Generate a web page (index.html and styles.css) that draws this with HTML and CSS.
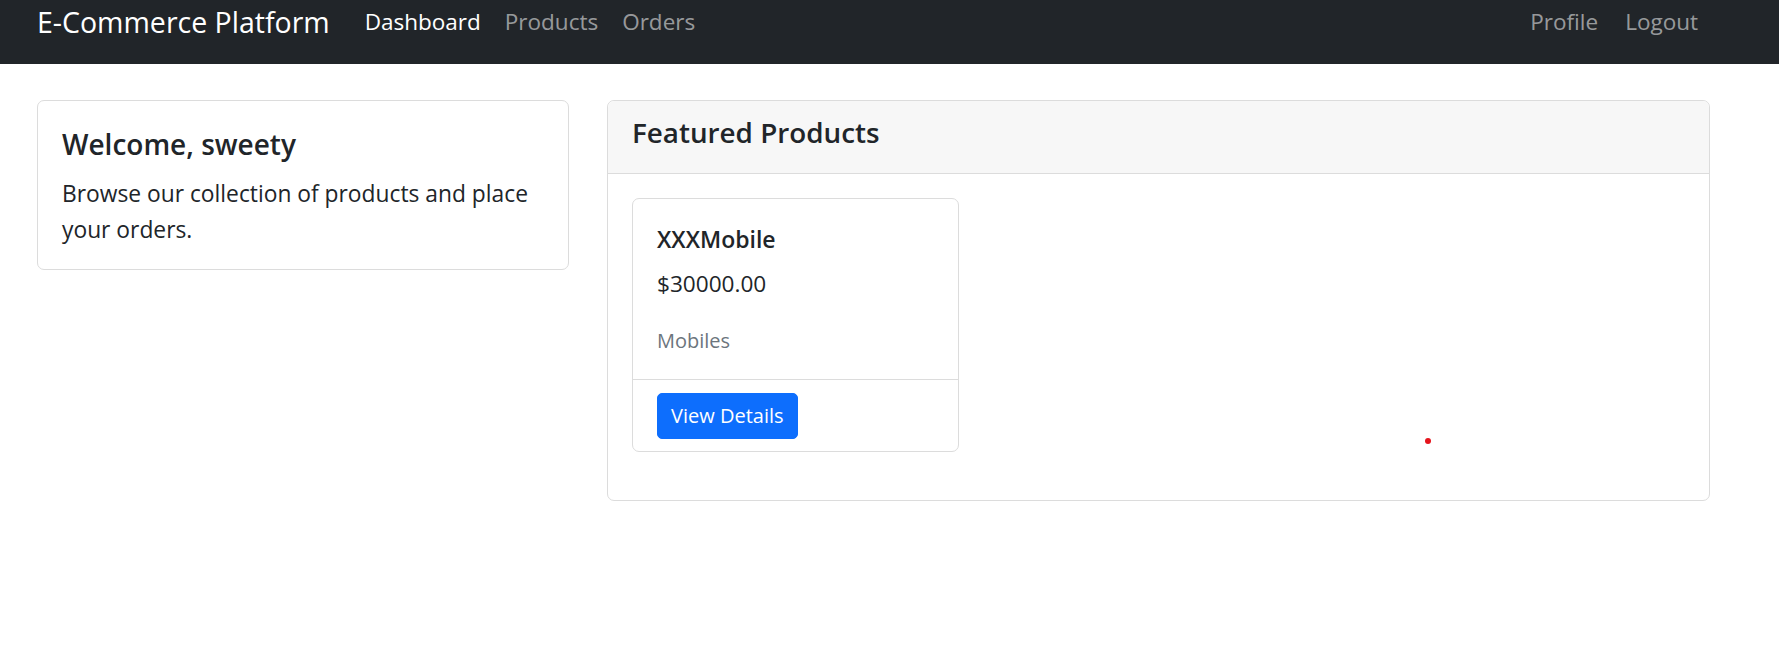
FILE: index.html
```html
<!DOCTYPE html>
<html lang="en">
<head>
<meta charset="utf-8">
<title>E-Commerce Platform</title>
<link rel="stylesheet" href="styles.css">
</head>
<body>
<nav class="navbar">
  <a class="brand" href="#">E-Commerce Platform</a>
  <ul class="nav-links">
    <li><a class="nav-link active" href="#">Dashboard</a></li>
    <li><a class="nav-link" href="#">Products</a></li>
    <li><a class="nav-link" href="#">Orders</a></li>
  </ul>
  <ul class="nav-links nav-right">
    <li><a class="nav-link" href="#">Profile</a></li>
    <li><a class="nav-link" href="#">Logout</a></li>
  </ul>
</nav>
<main class="main">
  <section class="card welcome">
    <div class="welcome-body">
      <h5 class="card-title">Welcome, sweety</h5>
      <p class="welcome-text">Browse our collection of products and place your orders.</p>
    </div>
  </section>
  <section class="card featured">
    <div class="card-header">
      <h4 class="header-title">Featured Products</h4>
    </div>
    <div class="featured-body">
      <div class="product-grid">
        <div class="card product">
          <div class="product-body">
            <h5 class="product-title">XXXMobile</h5>
            <p class="price">$30000.00</p>
            <p class="category">Mobiles</p>
          </div>
          <div class="product-footer">
            <a class="btn-primary" href="#">View Details</a>
          </div>
        </div>
      </div>
    </div>
  </section>
</main>
<span class="cursor-dot"></span>
</body>
</html>
```
FILE: styles.css
```css
* { box-sizing: border-box; }
html, body { margin: 0; padding: 0; }
body {
  font-family: "Open Sans", "Noto Sans", "Liberation Sans", sans-serif;
  color: #212529;
  background: #fff;
  position: relative;
  min-height: 661px;
}
a { text-decoration: none; }

.navbar {
  display: flex;
  align-items: flex-start;
  height: 64px;
  background: #212529;
  padding: 0 81px 0 37px;
}
.brand {
  color: #fff;
  font-size: 28.5px;
  line-height: 44px;
  white-space: nowrap;
}
.nav-links {
  list-style: none;
  display: flex;
  gap: 24px;
  margin: 0 0 0 35px;
  padding: 0;
}
.nav-right { margin-left: auto; gap: 27px; }
.nav-link {
  color: rgba(255, 255, 255, 0.55);
  font-size: 22.5px;
  line-height: 44px;
  display: block;
}
.nav-link.active { color: #fff; }

.main {
  display: grid;
  grid-template-columns: 532px 1103px;
  gap: 38px;
  align-items: start;
  padding: 36px 69px 0 37px;
}
.card {
  border: 1px solid #dcdcdc;
  border-radius: 7px;
  background: #fff;
}
.welcome-body { padding: 26px 24px 21px; }
.card-title {
  margin: 0 0 15px;
  font-size: 28px;
  font-weight: 600;
  line-height: 34px;
}
.welcome-text {
  margin: 0;
  font-size: 22.8px;
  line-height: 36px;
}

.card-header {
  background: #f7f7f7;
  border-bottom: 1px solid #dcdcdc;
  border-radius: 7px 7px 0 0;
  padding: 14px 24px 24px;
}
.header-title {
  margin: 0;
  font-size: 27.8px;
  font-weight: 600;
  line-height: 34px;
}
.featured-body { padding: 24px 24px 48px; }
.product-grid {
  display: grid;
  grid-template-columns: repeat(3, 1fr);
  gap: 36px;
}
.product-body { padding: 27px 24px 23px; }
.product-title {
  margin: 0 0 16px;
  font-size: 23px;
  font-weight: 600;
  line-height: 26px;
}
.price {
  margin: 0 0 25px;
  font-size: 22.6px;
  line-height: 31.5px;
}
.category {
  margin: 0;
  font-size: 20px;
  line-height: 31.5px;
  color: #6c757d;
}
.product-footer {
  border-top: 1px solid #dcdcdc;
  padding: 13px 24px 12px;
}
.btn-primary {
  display: inline-block;
  background: #0d6efd;
  border: 1px solid #0d6efd;
  color: #fff;
  font-size: 20px;
  line-height: 30px;
  padding: 7px 13px;
  border-radius: 5px;
}

.cursor-dot {
  position: absolute;
  left: 1425px;
  top: 438px;
  width: 6px;
  height: 6px;
  border-radius: 50%;
  background: #e5141c;
}
```
